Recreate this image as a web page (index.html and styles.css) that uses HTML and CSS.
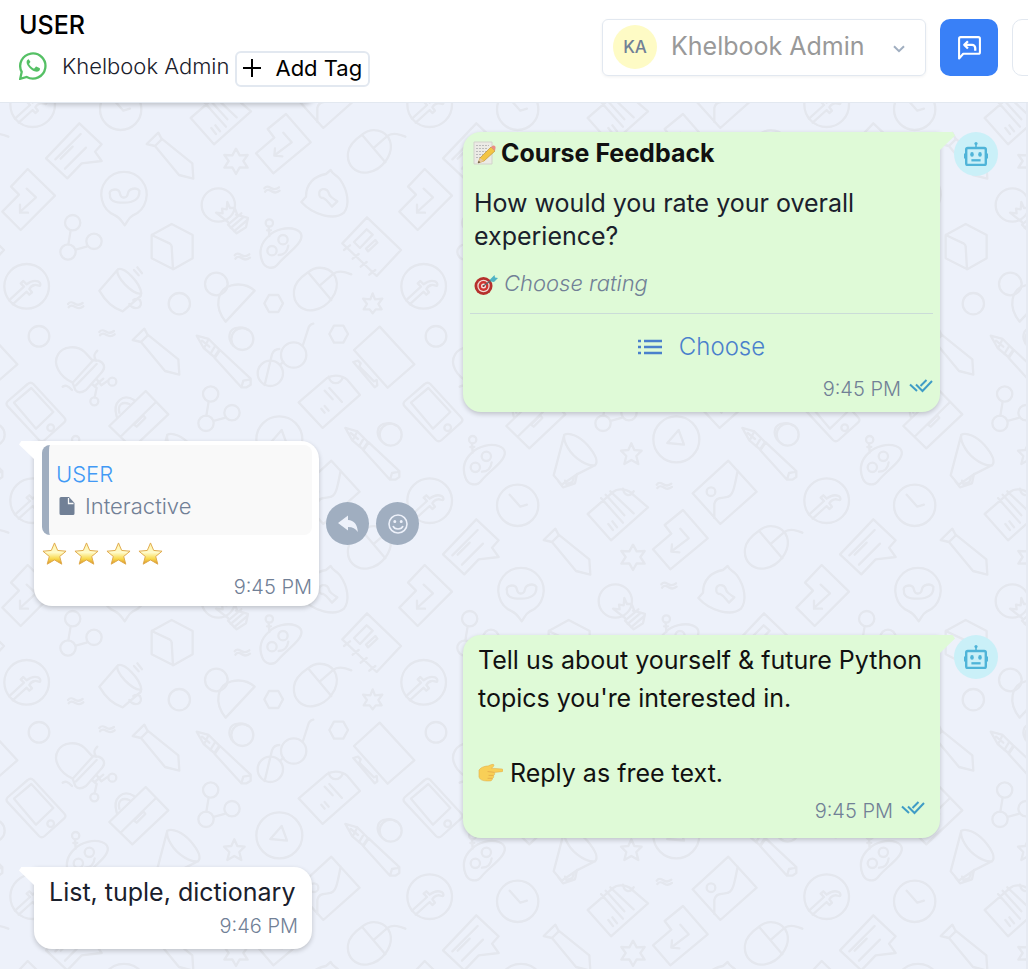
FILE: index.html
```html
<!DOCTYPE html>
<html lang="en">
  <head>
    <meta charset="UTF-8" />
    <meta name="viewport" content="width=device-width, initial-scale=1.0" />
    <title>USER - Chat</title>
    <link rel="stylesheet" href="styles.css">
  </head>
  <body>
    <!-- shared icons -->
    <svg class="defs" width="0" height="0" aria-hidden="true">
      <symbol id="robot" viewBox="0 0 24 24">
        <circle cx="12" cy="1.600" r="1.600" fill="currentColor" />
        <path d="M12 2v4" stroke="currentColor" stroke-width="1.600" />
        <rect x="2.200" y="6" width="19.600" height="17" rx="1.600" fill="none" stroke="currentColor" stroke-width="2.400" />
        <path d="M.9 11.500v5M23.100 11.500v5" stroke="currentColor" stroke-width="1.800" />
        <ellipse cx="8" cy="12.400" rx="1.800" ry="2.300" fill="currentColor" />
        <ellipse cx="16" cy="12.400" rx="1.800" ry="2.300" fill="currentColor" />
        <path d="M7.400 18.300h9.200" stroke="currentColor" stroke-width="2.300" />
      </symbol>
      <symbol id="ticks" viewBox="0 0 24 14">
        <path d="M1 5.500l7 6.500M7 5.500l6.500 6.500L23 2M11.500 7L17.500 1" fill="none" stroke="currentColor" stroke-width="2" />
      </symbol>
      <symbol id="star" viewBox="0 0 26 24">
        <path d="M13 1l3.300 7.800 8.700.8-6.600 5.500 2.200 8L13 18.700 5.400 23.100l2.200-8L1 9.600l8.700-.8z" fill="url(#gold)" stroke="#dfa94a" stroke-width="1" stroke-linejoin="round" />
      </symbol>
      <linearGradient id="gold" x1="0" y1="0" x2="0" y2="1">
        <stop offset="0" stop-color="#fff3a8" />
        <stop offset=".45" stop-color="#fffbc9" />
        <stop offset=".75" stop-color="#f8d84a" />
        <stop offset="1" stop-color="#d98f28" />
      </linearGradient>
    </svg>

    <header class="header">
      <div class="contact">
        <h1 class="contact_name">USER</h1>
        <div class="contact_info">
          <svg class="whatsapp" viewBox="0 0 28 28" aria-hidden="true">
            <path d="M2.700 19.900A12.600 12.600 0 1 1 7.700 25L1.200 26.800z" fill="none" stroke="#55c065" stroke-width="2.300" />
            <path d="M9 7.500c-1.900 1.200-1.800 3.600-.3 6.100 1.800 3 4.500 5.200 7.600 6 2.500.6 4.500-.6 4.700-2.600 0-.4-.1-.7-.5-.9l-2.900-1.400c-.4-.2-.7 0-1 .3l-1.100 1.300c-.3.3-.6.3-1 .1-2-1-3.300-2.300-4.300-4.100-.2-.4-.1-.6.1-.9l.9-1.200c.2-.3.2-.5.100-.8L10.100 7.900c-.2-.6-.6-.7-1.100-.4z" fill="#55c065" />
          </svg>
          <span class="channel">Khelbook Admin</span>
          <button class="add_tag" type="button">
            <svg viewBox="0 0 18 18" aria-hidden="true"><path d="M9 0v18M0 9h18" stroke="#000" stroke-width="2" /></svg>
            Add Tag
          </button>
        </div>
      </div>
      <div class="actions">
        <label class="agent">
          <span class="agent_avatar" aria-hidden="true">KA</span>
          <select class="agent_select" aria-label="Assigned agent">
            <option>Khelbook Admin</option>
          </select>
          <svg class="chevron" viewBox="0 0 12 8" aria-hidden="true"><path d="M1 1.200l5 5 5-5" fill="none" stroke="#a0aec0" stroke-width="2" /></svg>
        </label>
        <button class="reply_all" type="button" aria-label="Open conversation">
          <svg viewBox="0 0 24 24" fill="none" stroke="#fff" stroke-width="2" stroke-linejoin="round" aria-hidden="true">
            <path d="M2 22.500V3.500a1.500 1.500 0 0 1 1.500-1.500h17a1.500 1.500 0 0 1 1.500 1.500v13a1.500 1.500 0 0 1-1.500 1.500H6z" />
            <path d="M10.500 6l-3.500 3.500 3.500 3.500M7 9.500h7.500a3 3 0 0 1 3 3V15" stroke-width="2.200" />
          </svg>
        </button>
        <button class="more" type="button" aria-label="More actions"></button>
      </div>
    </header>

    <main class="chat">
      <!-- wallpaper: one tile of doodles, repeated -->
      <svg class="wallpaper" width="100%" height="100%" aria-hidden="true">
        <defs>
          <g id="fb"><circle r="67" /><path d="M-53 42L-8 1l-10-10 8-7 10 10C10-14 22-20 36-14c6 4 6 10 4 12-5 2-8-4-16-2C14-2 10 4 8 8l8 10-8 7-8-9-42 38" /></g>
          <g id="squiggle"><path d="M-23-2c8-10 14-4 22 0s14 4 22-3M-21 8c8-10 14-4 22 0s14 4 22-3" /></g>
          <g id="mouse"><path d="M-22-51C8-76 50-65 62-32 74 6 40 55-4 62-40 68-68 42-64 4c2-24 20-40 42-55zM-22-51L48 32M14-12L52-45c14-12 34-10 56 0" /></g>
          <g id="tie"><path d="M475 98l-35 34 25 6 72 87 43 11-3-46-93-75zM465 138l20-20" /></g>
          <g id="box_arrow"><path d="M83 207l82 80L62 390 7 335l50-51-24-24zM80 266l28 26-48 44M60 314v24h24" /></g>
          <g id="molecule"><circle cx="218" cy="368" r="23" /><circle cx="282" cy="424" r="23" /><circle cx="204" cy="456" r="23" /><path d="M212 391l-7 42M227 449l33-9" /></g>
          <g id="face"><circle cx="808" cy="369" r="11" /><path d="M806 380l2 28M801 391h12M806 408C826 388 862 380 886 388c22 8 24 24 8 44-18 22-44 40-60 60-14 18-40 14-48-10-10-28-2-54 20-74zM836 465c16 0 26-8 29-28" /><circle cx="849" cy="419" r="14" /><circle cx="816" cy="452" r="14" /></g>
          <g id="pen"><path d="M590 707l36 10 32 32-15 22-32-27zM606 722l22 18M626 717l-12 24M643 742l-12 20M660 750l92 86v18l-12 8h-16l-80-88zM752 838l-22 4-6 20" /></g>
          <g id="rings"><circle cx="727" cy="717" r="33" /><path d="M700 737c-20-22-14-52 14-54 14-2 22 0 28 6" /></g>

          <g id="doodles" fill="none" stroke="#e4e7ee" stroke-width="7" stroke-linejoin="round" stroke-linecap="round">
            <use href="#fb" x="98" y="14" />
            <use href="#fb" x="80" y="559" />
            <circle cx="362" cy="28" r="62" /><path d="M338-4l32 36 20-6" />
            <path d="M572 54l76-66c16-14 46-8 58 6l47 40-111 99zM678-22c4 24 22 24 32 8M612 6l66 74M626-4l56 62M640-14l70 66M634 84l14 18M646 76l14 18" />
            <path d="M238 70l67 63-20 22 20 28-60 7-43 45-64-60zM242 102l-76 76M218 140l-36 36M258 143l-63 63" />
            <use href="#tie" />
            <use href="#tie" x="-42" y="588" />
            <path d="M708 146l11 20 24-1-13 18 13 20-24-1-11 20-11-20-24 1 13-20-13-18 24 1z" />
            <path d="M858 42l74 85-112 93-52-60 55-47-20-26zM850 98l25 29-50 38M825 145l-2 22 24 2" />
            <use href="#box_arrow" />
            <use href="#mouse" x="1108" y="155" />
            <use href="#mouse" x="946" y="568" />
            <path d="M345 346a68 68 0 1 1 54 0c-14 8-16 18-25 30-9-12-12-22-29-30zM330 284c-6-12 14-20 26-12 6 6 2 18 12 20s14-2 16-12c2-14 26-20 34-8 2 26-18 36-46 36s-44-6-42-24z" />
            <circle cx="655" cy="315" r="50" /><path d="M684 366l-36-28 20 2-2-14 14 2 2-22 8 18 14 0 8 20M708 344l36 10-6 28-28 18-26-26 40-34M692 384l40-34M702 394l40-34" />
            <use href="#squiggle" x="816" y="267" />
            <use href="#squiggle" x="727" y="468" />
            <use href="#squiggle" x="227" y="614" />
            <use href="#squiggle" x="321" y="698" />
            <use href="#squiggle" x="802" y="1156" />
            <path d="M992 210c6 14 18 14 28 28 24 34 30 76 12 100-28 24-92 8-128-32l14-16c0-40 26-62 60-68zM958 284c-4-20 22-22 28-6 2 10 8 14 26 26l-16 16c-12-14-14-20-26-26-8 0-12-6-12-10z" />
            <use href="#molecule" />
            <use href="#molecule" x="414" y="514" />
            <path d="M515 372l63 33v70l-58 33-65-33v-70zM455 405l55 26q5 3 5 9l4 68" />
            <use href="#face" />
            <use href="#face" x="-581" y="650" />
            <path d="M1101 352l102 98-73 78-103-98zM1062 426l38-38 18 16-38 40zM1098 446l28-26 6 8-28 26zM1032 450l18-14M1058 476l18-14M1082 500l18-14M1108 524l18-14" />
            <path d="M368 634C336 624 314 600 298 572L354 508C340 524 400 588 424 580L422 588zM354 508C372 500 420 546 424 580M388 612c14 20 44 14 32-12-6-4-14-4-20 0M402 510l14 16M412 502l14 18" />
            <circle cx="538" cy="611" r="32" />
            <circle cx="117" cy="709" r="31" />
            <circle cx="649" cy="552" r="34" /><path d="M677 665C640 620 652 566 694 556c26-6 52 0 70 16z" />
            <path d="M807 585h28l14 25-14 26h-28l-14-26zM1002 677h28l14 25-14 26h-28l-14-26z" />
            <path d="M1118 580l7 18 22-2-12 16 10 16-18 0-9 12-9-12-18 0 10-16-12-16 22 2z" />
            <path d="M218 848C176 828 158 790 174 764c14-26 56-30 80-8l24 26zM218 848l8 22c8 10 20 8 32 0l48-54c12-14 6-28-10-34l-18-2M228 856l62-64M288 782c-8-14-6-20 4-30M216 870c-14-16-20-14-28-10M276 852l14 12-6 28M290 838l14 18 20-14M284 858l26-22" /><circle cx="337" cy="845" r="12" /><circle cx="283" cy="904" r="12" />
            <use href="#pen" />
            <use href="#pen" x="446" y="277" />
            <use href="#rings" />
            <use href="#rings" x="445" y="287" />
            <circle cx="881" cy="765" r="38" /><circle cx="811" cy="820" r="38" /><path d="M840 795l10-10M908 738l18-56q5-10 14-11M794 855l22-92q6-16 22-16" />
            <path d="M1139 680l104 113-80 70-101-113zM1060 786l14-4 8 8-4 10 44 44 8-4 2 16-8 6z" />
            <path d="M83 852q9-8 17 0l92 100q9 8 0 16l-58 52q-9 8-17 0L24 920q-9-9 0-17zM42 908l52-44 66 72-52 50z" /><circle cx="152" cy="983" r="10" />
            <path d="M437 873l68 70-108 102-69-67zM468 906l-104 102M350 950c-14-46 20-70 52-50M358 938c-6-26 10-34 30-26M402 974l28-28 6 8-26 26z" />
            <path d="M896 907l84-72c20-14 54-10 68 12l32 38-112 99zM986 830c6 24 32 26 42 4M974 872l24 26M988 864l38 42M964 926l10 12M974 918l12 14" />
            <path d="M502 1004C516 996 548 1008 572 1036 594 1062 606 1084 594 1096 572 1100 532 1076 514 1046 504 1030 498 1016 502 1004zM502 1004l-32 122 24 28 44-30 56-28M484 1144l14 18 36-12 6-28M504 1142l4 10 18-6 4-12" />
            <path d="M703 1030l9 20 22 2-16 16 6 24-21-12-21 12 6-24-16-16 22-2z" />
            <circle cx="838" cy="1018" r="69" /><path d="M845 990l16 44-50-5z" />
            <path d="M994 1082l85 93-109 97-83-92zM1022 1112c-8 40-12 72-28 78-14 6-38-2-42 22l0 42" /><circle cx="942" cy="1175" r="13" />
          </g>
          <pattern id="tile" width="397" height="396" patternUnits="userSpaceOnUse">
            <g transform="translate(0 -3) scale(.33333)">
              <use href="#doodles" />
              <use href="#doodles" x="-1191" />
              <use href="#doodles" y="-1188" />
              <use href="#doodles" y="1188" />
              <use href="#doodles" x="-1191" y="-1188" />
            </g>
          </pattern>
        </defs>
        <rect width="100%" height="100%" fill="url(#tile)" />
      </svg>

      <div class="row row_scrolled">
        <div class="bubble"></div>
      </div>

      <article class="row row_out">
        <div class="bubble bubble_out bubble_list">
          <h2 class="list_title">
            <svg class="emoji" viewBox="0 0 24 24" role="img" aria-label="memo">
              <path d="M2 1h18v22H2z" fill="#ecebe6" stroke="#d3d2cc" />
              <path d="M4 4.500h13M4 7.500h11M4 10.500h12M4 13.500h7M4 16.500h5" stroke="#bbb" stroke-width="1" stroke-dasharray="2 1" />
              <path d="M6 22l2-5L19 6l4 4-11 10z" fill="#f3c544" stroke="#b98a2c" stroke-width=".6" />
              <path d="M19 6l2-1.500c1.500-.5 3 1 2.500 2.500L23 10z" fill="#ea8f86" />
              <path d="M6 22l2-5 4 3z" fill="#e8c89b" /><path d="M6 22l.8-2 1.400 1.200z" fill="#333" />
            </svg>
            Course Feedback
          </h2>
          <p class="list_body">How would you rate your overall experience?</p>
          <p class="list_footer">
            <svg class="emoji" viewBox="0 0 24 24" role="img" aria-label="target">
              <circle cx="9.500" cy="14" r="9" fill="#b5302c" /><circle cx="9.500" cy="14" r="6.200" fill="#f0d9d4" /><circle cx="9.500" cy="14" r="4.900" fill="#cf3430" /><circle cx="9.500" cy="14" r="2.500" fill="#f4e4e0" /><circle cx="9.500" cy="14" r="1.100" fill="#a11" />
              <path d="M9.500 14L19 7" stroke="#5a6b6e" stroke-width="1.400" /><path d="M16 7.500l4.500-4.500.5 2.500 3 .5-4 4-3-.5z" fill="#4fb3c4" />
            </svg>
            <em>Choose rating</em>
          </p>
          <button class="choose" type="button">
            <svg viewBox="0 0 24 16" aria-hidden="true"><path d="M6 2h18M6 8h18M6 14h18M0 2h3M0 8h3M0 14h3" stroke="#4a80cc" stroke-width="2.400" /></svg>
            Choose
          </button>
          <footer class="meta"><time>9:45 PM</time><svg class="ticks" aria-label="Read"><use href="#ticks" /></svg></footer>
        </div>
        <span class="bot"><svg><use href="#robot" /></svg></span>
      </article>

      <article class="row row_in">
        <div class="bubble bubble_in bubble_quote">
          <blockquote class="quote">
            <span class="quote_name">USER</span>
            <span class="quote_type">
              <svg viewBox="0 0 16 20" aria-hidden="true"><path d="M2 1h8l5.500 6v10.500A1.500 1.500 0 0 1 14 19H2A1.500 1.500 0 0 1 .5 17.500v-15A1.500 1.500 0 0 1 2 1z" fill="#718096" /><path d="M9.500 2v5.500h5" fill="none" stroke="#f9f9f9" stroke-width="1.300" /></svg>
              Interactive
            </span>
          </blockquote>
          <p class="stars" role="img" aria-label="4 stars">
            <svg><use href="#star" /></svg>
            <svg><use href="#star" /></svg>
            <svg><use href="#star" /></svg>
            <svg><use href="#star" /></svg>
          </p>
          <footer class="meta"><time>9:45 PM</time></footer>
        </div>
        <div class="tools">
          <button type="button" aria-label="Reply">
            <svg viewBox="0 0 20 17" aria-hidden="true"><path d="M0 7.500L10 0v4.500c6 .2 9.500 4.500 9.800 12-2.300-3.400-5-5-9.800-5V15z" fill="#edf1fa" /></svg>
          </button>
          <button type="button" aria-label="Add reaction">
            <svg viewBox="0 0 20 20" fill="none" stroke="#edf1fa" stroke-width="1.600" aria-hidden="true"><circle cx="10" cy="10" r="9" /><path d="M5 12c1.500 4 8.500 4 10 0" /><circle cx="6.800" cy="7.500" r=".7" fill="#edf1fa" /><circle cx="13.200" cy="7.500" r=".7" fill="#edf1fa" /></svg>
          </button>
        </div>
      </article>

      <article class="row row_out">
        <div class="bubble bubble_out bubble_text">
          <p class="text">Tell us about yourself &amp; future Python topics you're interested in.</p>
          <p class="text text_last">
            <svg class="emoji" viewBox="0 0 26 20" role="img" aria-label="pointing right">
              <path d="M1 7C4 3 8 3 11 2.500 14 1 16 .5 16.500 1.500c.5 1.200-1 2.500-2.500 3.500l11 .8c1.500.3 1.500 2.500 0 2.800l-8 .8c1 2-.2 3-.8 3.300.5 2-.5 2.800-1.200 3 0 2-1.500 2.600-3 2.600C7 18.500 2 18 1 14z" fill="#f8cf57" stroke="#e0a84a" stroke-width=".5" />
              <path d="M10 8.500l7 .8M11 12.500h5M10 15.500h5" stroke="#e2a848" stroke-width=".8" fill="none" />
            </svg>
            Reply as free text.
          </p>
          <footer class="meta"><time>9:45 PM</time><svg class="ticks" aria-label="Read"><use href="#ticks" /></svg></footer>
        </div>
        <span class="bot"><svg><use href="#robot" /></svg></span>
      </article>

      <article class="row row_in">
        <div class="bubble bubble_in bubble_short">
          <p class="short_text">List, tuple, dictionary</p>
          <footer class="meta"><time>9:46 PM</time></footer>
        </div>
      </article>
    </main>
  </body>
</html>
```
FILE: styles.css
```css
* {
  box-sizing: border-box;
  margin: 0;
  padding: 0;
}
body {
  min-height: 100vh;
  display: flex;
  flex-direction: column;
  padding-bottom: 5px;
  overflow: hidden;
  background-color: #fff;
  color: #1a202c;
  font-family: Inter, "Liberation Sans", sans-serif;
  font-size: 24px;
}
button,
select {
  font: inherit;
  color: inherit;
}
svg {
  display: block;
  flex-shrink: 0;
}
.defs {
  position: absolute;
}

/* header */
.header {
  display: flex;
  justify-content: space-between;
  height: 103px;
  padding: 8px 0 0 19px;
  border-bottom: 1px solid #e2e8f0;
  overflow: hidden;
}
.contact_name {
  color: #000;
  font-size: 25px;
  font-weight: 500;
  line-height: 34px;
}
.contact_info {
  display: flex;
  align-items: center;
  margin-top: 9px;
  font-size: 22px;
}
.whatsapp {
  width: 28px;
  height: 28px;
  margin-bottom: 6px;
}
.channel {
  margin: 0 6px 6px 15px;
  font-weight: 300;
}
.add_tag {
  display: flex;
  align-items: center;
  gap: 14px;
  height: 36px;
  padding: 0 6px 2px;
  border: 2px solid #e2e8f0;
  border-radius: 6px;
  background-color: #fff;
  color: #000;
}
.add_tag svg {
  width: 18px;
  height: 18px;
}
.actions {
  display: flex;
  gap: 14px;
  height: 57px;
  margin: 11px -42px 0 0;
}
.agent {
  position: relative;
  display: flex;
  align-items: center;
  width: 324px;
  padding-left: 10px;
  border: 1px solid #e2e8f0;
  border-radius: 6px;
  box-shadow: 0 1px 3px rgba(0, 0, 0, 0.06);
}
.agent_avatar {
  display: grid;
  place-items: center;
  width: 44px;
  height: 44px;
  margin-bottom: 2px;
  border-radius: 50%;
  background-color: #fefbc5;
  color: #718096;
  font-size: 17px;
  font-weight: 500;
}
.agent_select {
  flex: 1;
  height: 100%;
  padding: 0 0 4px 14px;
  border: 0;
  background: none;
  appearance: none;
  color: #999;
  font-size: 25px;
}
.chevron {
  position: absolute;
  right: 20px;
  top: 25px;
  width: 12px;
  height: 8px;
}
.reply_all,
.more {
  display: grid;
  place-items: center;
  width: 58px;
  border: 0;
  border-radius: 10px;
  background-color: #3980f7;
}
.reply_all svg {
  width: 25px;
  height: 25px;
}
.more {
  border: 1px solid #e2e8f0;
  background-color: #fff;
}

/* chat */
.chat {
  position: relative;
  flex: 1;
  display: flex;
  flex-direction: column;
  gap: 29px;
  padding: 0 28px 20px 34px;
  border-right: 2px solid #e6eaf2;
  background-color: #edf1fa;
  overflow: hidden;
}
.wallpaper {
  position: absolute;
  top: 0;
  left: 0;
}
.row {
  position: relative;
  display: flex;
}
.row_scrolled .bubble {
  width: 285px;
  height: 40px;
  margin-top: -40px;
  background-color: #fff;
}
.row_out {
  justify-content: flex-end;
  gap: 14px;
}
.row_in {
  align-items: center;
  gap: 7px;
}
.bubble {
  position: relative;
  border-radius: 18px;
  box-shadow: 0 2px 5px rgba(0, 0, 0, 0.2);
}
.bubble_out {
  flex: 0 1 477px;
  border-top-right-radius: 0;
  background-color: #dffad7;
}
.bubble_in {
  border-top-left-radius: 0;
  background-color: #fff;
}
/* bubble tails */
.bubble_out::after,
.bubble_in::before {
  content: "";
  position: absolute;
  top: 0;
  width: 15px;
  height: 18px;
  background-color: inherit;
}
.bubble_out::after {
  left: 100%;
  clip-path: polygon(0 0, 84% 0, 100% 20%, 0 100%);
}
.bubble_in::before {
  right: 100%;
  clip-path: polygon(100% 0, 16% 0, 0 20%, 100% 100%);
}
.meta {
  display: flex;
  justify-content: flex-end;
  gap: 8px;
  color: #718096;
  font-size: 20px;
  font-weight: 300;
  line-height: 26px;
}
.ticks {
  width: 24px;
  height: 14px;
  margin-top: 3px;
  color: #3f9cc6;
}
.bot {
  display: grid;
  place-items: center;
  width: 44px;
  height: 44px;
  border-radius: 50%;
  background-color: #caf0f8;
  color: #4fb4d8;
}
.bot svg {
  width: 24px;
  height: 24px;
}

/* list message */
.bubble_list {
  padding: 4px 7px 10px;
}
.list_title {
  display: flex;
  align-items: center;
  gap: 5px;
  padding-left: 2px;
  color: #111;
  font-size: 25px;
  font-weight: 700;
  line-height: 34px;
}
.list_title .emoji {
  width: 24px;
  height: 24px;
}
.list_body {
  margin-top: 17px;
  padding-left: 4px;
  font-size: 25px;
  line-height: 33px;
}
.list_footer {
  display: flex;
  align-items: center;
  gap: 6px;
  margin-top: 16px;
  padding: 0 4px 15px;
  border-bottom: 1px solid #cbdcd8;
  color: #718096;
  font-size: 22px;
  font-weight: 300;
  line-height: 29px;
}
.list_footer .emoji {
  width: 24px;
  height: 24px;
}
.choose {
  display: flex;
  align-items: center;
  justify-content: center;
  gap: 17px;
  width: 100%;
  height: 62px;
  padding-top: 3px;
  border: 0;
  background: none;
  color: #4a80cc;
  font-weight: 300;
}
.choose svg {
  width: 24px;
  height: 16px;
}

/* quoted reply */
.bubble_quote {
  width: 285px;
  padding: 4px 7px 6px 8px;
}
.quote {
  display: flex;
  flex-direction: column;
  height: 90px;
  padding: 13px 7px;
  border-left: 7px solid #a0aec0;
  border-radius: 8px;
  background-color: #f9f9f9;
  font-size: 22px;
  font-weight: 300;
  line-height: 32px;
}
.quote_name {
  color: #4299f5;
}
.quote_type {
  display: flex;
  align-items: center;
  gap: 10px;
  padding-left: 3px;
  color: #718096;
}
.quote_type svg {
  width: 16px;
  height: 20px;
}
.stars {
  display: flex;
  gap: 7px;
  padding: 6px 0 8px;
}
.stars svg {
  width: 25px;
  height: 25px;
}
.tools {
  display: flex;
  gap: 7px;
}
.tools button {
  display: grid;
  place-items: center;
  width: 43px;
  height: 43px;
  border: 0;
  border-radius: 50%;
  background-color: #a0aec0;
}
.tools svg {
  width: 20px;
  height: 20px;
}

/* plain text messages */
.bubble_text {
  padding: 6px 15px 14px;
  color: #111;
  font-size: 25px;
  line-height: 38px;
}
.text_last {
  display: flex;
  align-items: center;
  gap: 7px;
  margin: 37px 0 6px;
}
.text_last .emoji {
  width: 25px;
  height: 20px;
}
.bubble_short {
  min-width: 278px;
  padding: 6px 14px 10px 15px;
}
.short_text {
  margin-bottom: 2px;
  font-size: 25px;
  line-height: 38px;
}
```
